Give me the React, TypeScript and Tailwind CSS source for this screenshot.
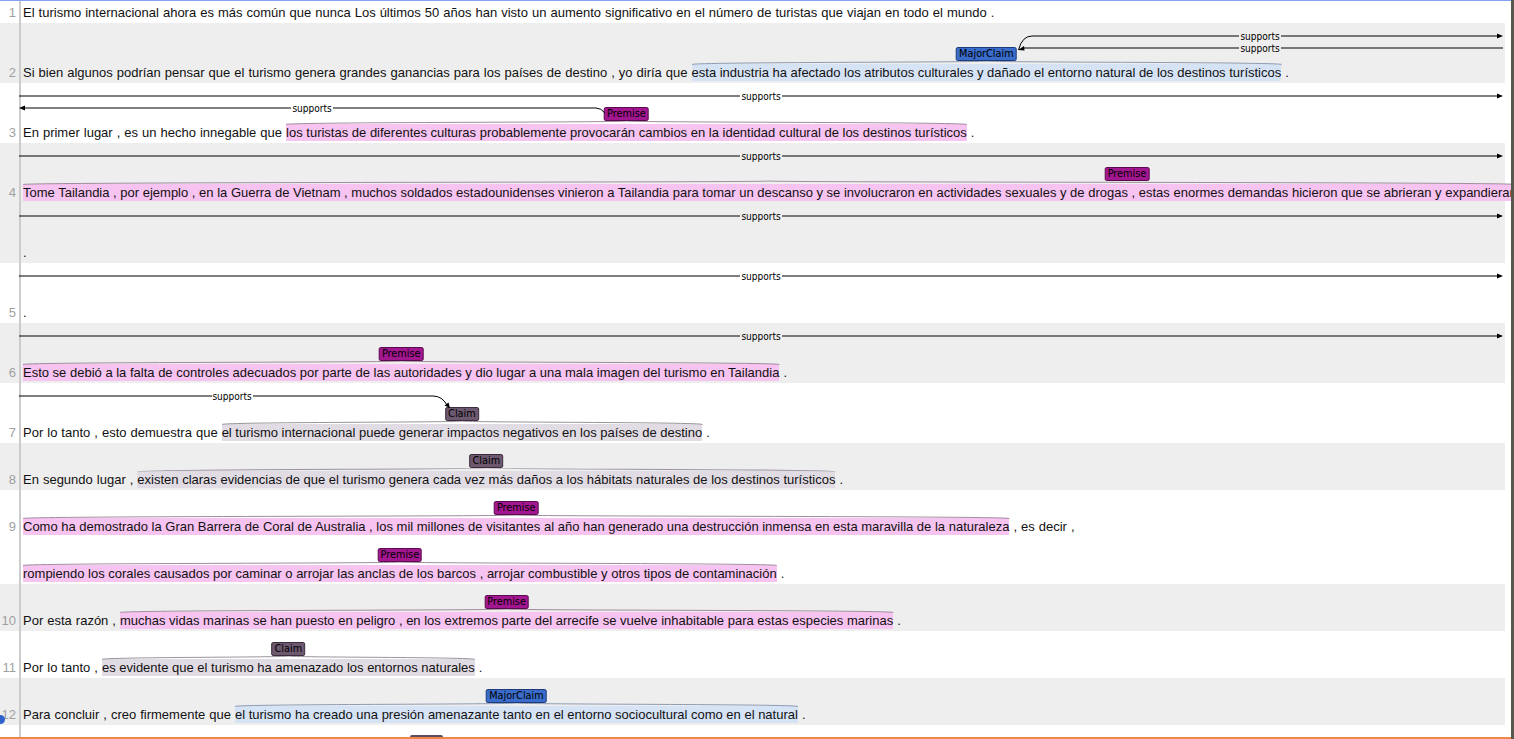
import type { ReactNode } from "react";

type Kind = "MajorClaim" | "Premise" | "Claim";
type Seg = { t: string; k?: Kind; center?: number };
type Sub = { h: number; segs: Seg[] };
type Row = { n?: number; gray: boolean; subs: Sub[]; arcs?: ReactNode };

const KIND: Record<Kind, { span: string; label: string; curly: string }> = {
    MajorClaim: { span: "bg-[#d6e3f5]", label: "bg-[#3a6ccb] border-[#1d3b78]", curly: "#8d9bb3" },
    Premise: { span: "bg-[#f7c3f0]", label: "bg-[#a2168f] border-[#5a0b4f]", curly: "#a08c9e" },
    Claim: { span: "bg-[#e1dce4]", label: "bg-[#6d586f] border-[#3b2d3d]", curly: "#9a939c" },
};

const labelFont = { fontFamily: '"DejaVu Sans Condensed", "DejaVu Sans", sans-serif' };

// span with its label; center = label centre in px from span start when the span runs off the page
function Ann({ k, center, children }: { k: Kind; center?: number; children: ReactNode }) {
    const s = KIND[k];
    return (
        <span className={`relative inline-block h-[17px] leading-[17px] ${s.span}`}>
            <svg className="absolute left-0 bottom-full w-full h-[3px] overflow-visible" viewBox="0 0 100 3" preserveAspectRatio="none">
                <path d="M0,3.5 C0,1 50,1.5 50,0 C50,1.5 100,1 100,3.5" fill="none" stroke={s.curly} strokeWidth="1" vectorEffect="non-scaling-stroke" />
            </svg>
            <span
                className={`absolute -translate-x-1/2 bottom-[20px] h-[14px] px-[2px] border rounded-[2px] text-[10.8px] leading-[12px] text-black whitespace-nowrap ${s.label} ${center === undefined ? "left-1/2" : ""}`}
                style={center === undefined ? labelFont : { ...labelFont, left: center }}
            >
                {k}
            </span>
            {children}
        </span>
    );
}

// arrowheads
const arrowR = (x: number, y: number) => `${x},${y} ${x - 6},${y - 2.5} ${x - 6},${y + 2.5}`;
const arrowL = (x: number, y: number) => `${x},${y} ${x + 6},${y - 2.5} ${x + 6},${y + 2.5}`;

function Supports({ x, y }: { x: number; y: number }) {
    return (
        <text x={x} y={y} textAnchor="middle" dominantBaseline="central" fontSize="10" fill="#000" style={labelFont}>
            supports
        </text>
    );
}

// a full-width arc that runs off to the right
function FullArc({ y }: { y: number }) {
    return (
        <>
            <path d={`M19,${y} H740 M782,${y} H1498`} stroke="#000" fill="none" />
            <polygon points={arrowR(1503, y)} fill="#000" />
            <Supports x={761} y={y} />
        </>
    );
}

function Arcs({ h, children }: { h: number; children: ReactNode }) {
    return (
        <svg className="absolute left-0 top-0 overflow-visible pointer-events-none" width={1505} height={h}>
            {children}
        </svg>
    );
}

const rows: Row[] = [
    {
        n: 1, gray: false,
        subs: [{ h: 22, segs: [{ t: "El turismo internacional ahora es más común que nunca Los últimos 50 años han visto un aumento significativo en el número de turistas que viajan en todo el mundo ." }] }],
    },
    {
        n: 2, gray: true,
        subs: [{
            h: 60, segs: [
                { t: "Si bien algunos podrían pensar que el turismo genera grandes ganancias para los países de destino , yo diría que " },
                { t: "esta industria ha afectado los atributos culturales y dañado el entorno natural de los destinos turísticos", k: "MajorClaim" },
                { t: " ." },
            ],
        }],
        arcs: (
            <Arcs h={60}>
                <path d="M1018.5,27 Q1022,13 1032,13 H1239 M1281,13 H1498" stroke="#000" fill="none" />
                <polygon points={arrowR(1503, 13)} fill="#000" />
                <Supports x={1260} y={13} />
                <path d="M1023,25 H1239 M1281,25 H1503" stroke="#000" fill="none" />
                <polygon points="1018,27 1024,23 1024.5,27.5" fill="#000" />
                <Supports x={1260} y={25} />
            </Arcs>
        ),
    },
    {
        n: 3, gray: false,
        subs: [{
            h: 60, segs: [
                { t: "En primer lugar , es un hecho innegable que " },
                { t: "los turistas de diferentes culturas probablemente provocarán cambios en la identidad cultural de los destinos turísticos", k: "Premise" },
                { t: " ." },
            ],
        }],
        arcs: (
            <Arcs h={60}>
                <FullArc y={13} />
                <path d="M24,25 H291 M333,25 H596 Q601,25 605,30" stroke="#000" fill="none" />
                <polygon points={arrowL(19, 25)} fill="#000" />
                <Supports x={312} y={25} />
            </Arcs>
        ),
    },
    {
        n: 4, gray: true,
        subs: [
            {
                h: 60, segs: [
                    { t: "Tome Tailandia , por ejemplo , en la Guerra de Vietnam , muchos soldados estadounidenses vinieron a Tailandia para tomar un descanso y se involucraron en actividades sexuales y de drogas , estas enormes demandas hicieron que se abrieran y expandieran", k: "Premise", center: 1104 },
                ],
            },
            { h: 60, segs: [{ t: "." }] },
        ],
        arcs: (
            <Arcs h={120}>
                <FullArc y={13} />
                <FullArc y={73} />
            </Arcs>
        ),
    },
    {
        n: 5, gray: false,
        subs: [{ h: 60, segs: [{ t: "." }] }],
        arcs: (
            <Arcs h={60}>
                <FullArc y={13} />
            </Arcs>
        ),
    },
    {
        n: 6, gray: true,
        subs: [{
            h: 60, segs: [
                { t: "Esto se debió a la falta de controles adecuados por parte de las autoridades y dio lugar a una mala imagen del turismo en Tailandia", k: "Premise" },
                { t: " ." },
            ],
        }],
        arcs: (
            <Arcs h={60}>
                <FullArc y={13} />
            </Arcs>
        ),
    },
    {
        n: 7, gray: false,
        subs: [{
            h: 60, segs: [
                { t: "Por lo tanto , esto demuestra que " },
                { t: "el turismo internacional puede generar impactos negativos en los países de destino", k: "Claim" },
                { t: " ." },
            ],
        }],
        arcs: (
            <Arcs h={60}>
                <path d="M19,13 H212 M253,13 H433 Q442,13 447,22" stroke="#000" fill="none" />
                <polygon points="450,25 444.5,22.5 448.5,19.5" fill="#000" />
                <Supports x={232} y={13} />
            </Arcs>
        ),
    },
    {
        n: 8, gray: true,
        subs: [{
            h: 47, segs: [
                { t: "En segundo lugar , " },
                { t: "existen claras evidencias de que el turismo genera cada vez más daños a los hábitats naturales de los destinos turísticos", k: "Claim" },
                { t: " ." },
            ],
        }],
    },
    {
        n: 9, gray: false,
        subs: [
            {
                h: 47, segs: [
                    { t: "Como ha demostrado la Gran Barrera de Coral de Australia , los mil millones de visitantes al año han generado una destrucción inmensa en esta maravilla de la naturaleza", k: "Premise" },
                    { t: " , es decir ," },
                ],
            },
            {
                h: 47, segs: [
                    { t: "rompiendo los corales causados por caminar o arrojar las anclas de los barcos , arrojar combustible y otros tipos de contaminación", k: "Premise" },
                    { t: " ." },
                ],
            },
        ],
    },
    {
        n: 10, gray: true,
        subs: [{
            h: 47, segs: [
                { t: "Por esta razón , " },
                { t: "muchas vidas marinas se han puesto en peligro , en los extremos parte del arrecife se vuelve inhabitable para estas especies marinas", k: "Premise" },
                { t: " ." },
            ],
        }],
    },
    {
        n: 11, gray: false,
        subs: [{
            h: 47, segs: [
                { t: "Por lo tanto , " },
                { t: "es evidente que el turismo ha amenazado los entornos naturales", k: "Claim" },
                { t: " ." },
            ],
        }],
    },
    {
        n: 12, gray: true,
        subs: [{
            h: 47, segs: [
                { t: "Para concluir , creo firmemente que " },
                { t: "el turismo ha creado una presión amenazante tanto en el entorno sociocultural como en el natural", k: "MajorClaim" },
                { t: " ." },
            ],
        }],
    },
];

function RowView({ row }: { row: Row }) {
    return (
        <div className={`relative flex w-[1505px] ${row.gray ? "bg-[#eeeeee]" : "bg-white"}`}>
            <div className="w-[21px] shrink-0 border-r-2 border-[#cccccc]">
                {row.subs.map((s, i) => (
                    <div key={i} className="flex items-end justify-end pb-[1px] pr-[3px]" style={{ height: s.h }}>
                        <span className="h-[18px] leading-[18px] text-[#a0a0a0]">{i === 0 ? row.n : ""}</span>
                    </div>
                ))}
            </div>
            <div className="pl-[2px]">
                {row.subs.map((s, i) => (
                    <div key={i} className="flex items-end pb-[1px]" style={{ height: s.h }}>
                        <div className="h-[18px] leading-[18px] whitespace-pre text-[#111]">
                            {s.segs.map((g, j) => g.k
                                ? <Ann key={j} k={g.k} center={g.center}>{g.t}</Ann>
                                : <span key={j} className="[word-spacing:0.4px]">{g.t}</span>)}
                        </div>
                    </div>
                ))}
            </div>
            {row.arcs}
        </div>
    );
}

export default function App() {
    return (
        <div className="flex w-[1514px] h-[739px] overflow-hidden bg-white" style={{ fontFamily: '"Liberation Sans", Arial, sans-serif' }}>
            <div className="relative w-[1511px] h-[739px] overflow-hidden border-t border-b-2 border-t-[#80a3f2] border-b-[#f0874a] text-[13px]">
                {rows.map((r) => <RowView key={r.n} row={r} />)}
                <div className="relative flex w-[1505px] h-[12px] bg-white">
                    <div className="w-[21px] shrink-0 border-r-2 border-[#cccccc]" />
                    <span className="absolute left-[410px] top-[10px] w-[33px] h-[14px] rounded-[2px] bg-[#5d4a5f]" />
                </div>
                <span className="absolute left-[-4px] top-[714px] w-[9px] h-[9px] rounded-full bg-[#2f62cf]" />
            </div>
            <div className="w-[3px] h-[739px] bg-[#58584f]" />
        </div>
    );
}
